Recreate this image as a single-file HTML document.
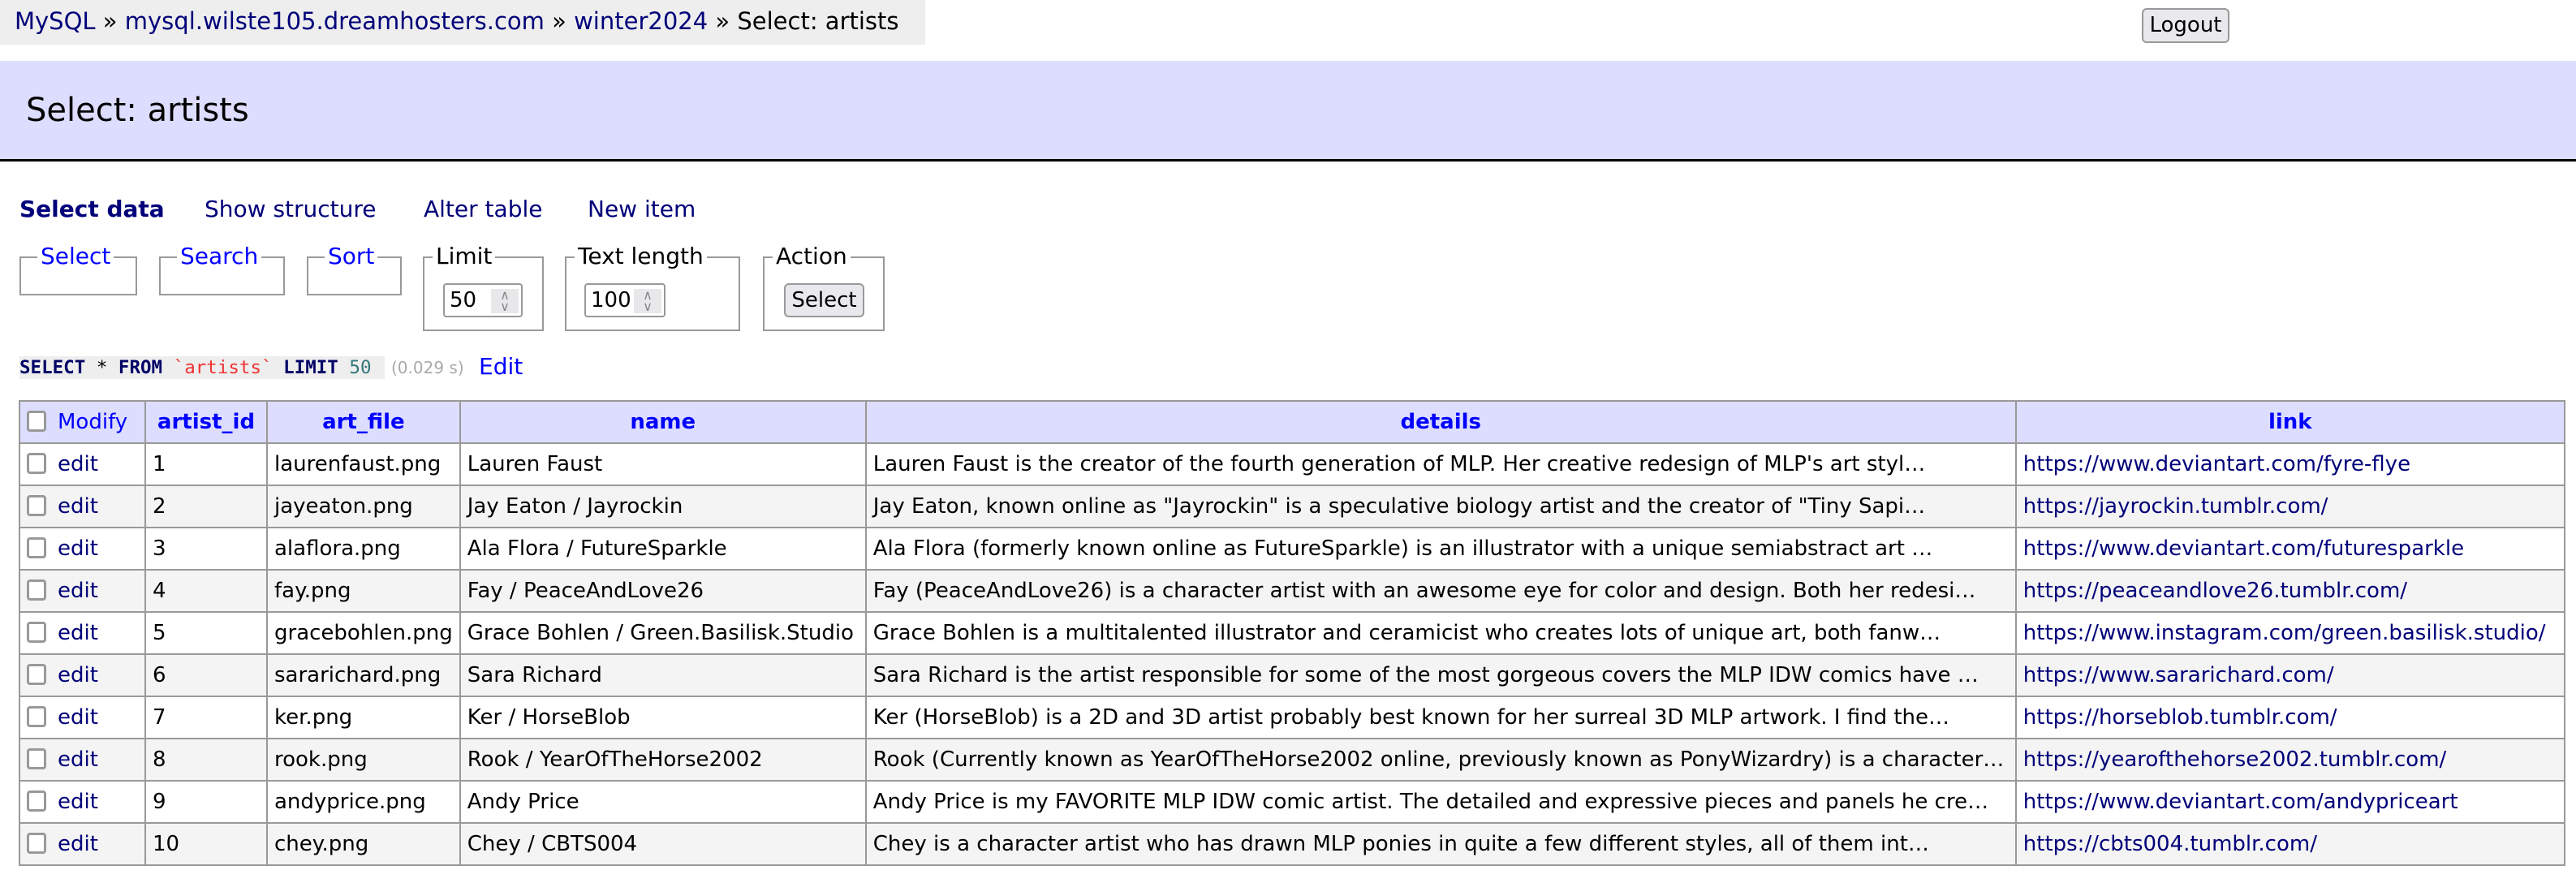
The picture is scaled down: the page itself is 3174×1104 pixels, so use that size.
<!DOCTYPE html>
<html><head><meta charset="utf-8"><style>
body{margin:0;width:3174px;height:1104px;background:#fff;font-family:"DejaVu Sans","Liberation Sans",sans-serif;font-size:26px;color:#000;position:relative;overflow:hidden}
.a{position:absolute;white-space:nowrap}
a{text-decoration:none;color:#00a}
#bc{left:0;top:0;width:1140px;height:55px;background:#eee;line-height:52px;font-size:29px;padding-left:18px;box-sizing:border-box}
#bc a{color:#00007a}
#logout{left:2639px;top:10px;width:108px;height:43px;border:2px solid #999;border-radius:6px;background:#e9e9ed;box-sizing:border-box;text-align:center;line-height:39px;font-size:26px}
#hd{left:0;top:75px;width:3174px;height:121px;background:#ddf;border-bottom:3px solid #000}
#hd span{position:absolute;left:32px;top:36px;font-size:40px;line-height:50px}
.menu{top:238px;font-size:28px;line-height:40px}
.menu a{color:#00007a}
.fs{position:absolute;border:2px solid #999;box-sizing:border-box}
.lg{position:absolute;top:-20px;background:#fff;padding:0 4px;font-size:28px;line-height:36px;white-space:nowrap}
.lg a{color:#00f}
.inp{position:absolute;border:2px solid #999;border-radius:4px;box-sizing:border-box;background:#fff;font-size:26px;line-height:38px;padding-left:6px}
.spin{position:absolute;right:3px;top:5px;width:34px;height:30px;background:#e8e8ea;color:#888;font-size:16px;line-height:14px;text-align:center;padding-top:1px;box-sizing:border-box}
.btn{position:absolute;border:2px solid #999;border-radius:6px;background:#e9e9ed;box-sizing:border-box;text-align:center;font-size:26px;line-height:38px}
#sql{left:24px;top:439px;height:28px;width:450px;background:#eee;font-family:"DejaVu Sans Mono","Liberation Mono",monospace;font-weight:bold;font-size:22.5px;line-height:28px;color:#006;overflow:hidden}
table{position:absolute;left:23px;top:493px;border-collapse:collapse;table-layout:fixed}
td,th{border:2px solid #999;height:50px;padding:0 8px;white-space:nowrap;overflow:hidden;font-size:26px;line-height:48px}
th{background:#ddf;color:#00f;font-weight:bold}
th a{color:#00f}
tr:nth-child(odd) td{background:#f4f4f4}
td a{color:#00007a}
.cb{display:inline-block;width:24px;height:26px;border:3px solid #999;border-radius:4px;vertical-align:-4px;margin-right:14px;box-sizing:border-box;background:#fff}
th.m{font-weight:normal;text-align:left}
</style></head><body>
<div id="bc" class="a"><a>MySQL</a> » <a>mysql.wilste105.dreamhosters.com</a> » <a>winter2024</a> » Select: artists</div>
<div id="logout" class="a">Logout</div>
<div id="hd" class="a"><span>Select: artists</span></div>
<div class="a menu" style="left:24px"><b><a>Select data</a></b></div>
<div class="a menu" style="left:252px"><a>Show structure</a></div>
<div class="a menu" style="left:522px"><a>Alter table</a></div>
<div class="a menu" style="left:724px"><a>New item</a></div>

<div class="fs" style="left:24px;top:316px;width:145px;height:48px"><div class="lg" style="left:20px"><a>Select</a></div></div>
<div class="fs" style="left:196px;top:316px;width:155px;height:48px"><div class="lg" style="left:20px"><a>Search</a></div></div>
<div class="fs" style="left:378px;top:316px;width:117px;height:48px"><div class="lg" style="left:20px"><a>Sort</a></div></div>
<div class="fs" style="left:521px;top:316px;width:149px;height:92px"><div class="lg" style="left:10px">Limit</div>
 <div class="inp" style="left:23px;top:31px;width:98px;height:42px">50<div class="spin">&#8743;<br>&#8744;</div></div></div>
<div class="fs" style="left:696px;top:316px;width:216px;height:92px"><div class="lg" style="left:10px">Text length</div>
 <div class="inp" style="left:22px;top:31px;width:100px;height:42px">100<div class="spin">&#8743;<br>&#8744;</div></div></div>
<div class="fs" style="left:940px;top:316px;width:150px;height:92px"><div class="lg" style="left:10px">Action</div>
 <div class="btn" style="left:24px;top:31px;width:99px;height:42px">Select</div></div>

<div id="sql" class="a">SELECT <span style="font-weight:normal;color:#000">*</span> FROM <span style="font-weight:normal;color:#e33">`artists`</span> LIMIT <span style="font-weight:normal;color:#377">50</span></div>
<div class="a" style="left:482px;top:437px;font-size:20px;line-height:32px;color:#aaa">(0.029 s)</div>
<div class="a" style="left:590px;top:432px;font-size:28px;line-height:40px"><a style="color:#00f">Edit</a></div>

<table>
<colgroup><col style="width:155px"><col style="width:150px"><col style="width:235px"><col style="width:500px"><col style="width:1417px"><col style="width:676px"></colgroup>
<tr><th class="m"><span class="cb"></span><a>Modify</a></th><th><a>artist_id</a></th><th><a>art_file</a></th><th><a>name</a></th><th><a>details</a></th><th><a>link</a></th></tr>
<tr><td><span class="cb"></span><a>edit</a></td><td>1</td><td>laurenfaust.png</td><td>Lauren Faust</td><td>Lauren Faust is the creator of the fourth generation of MLP. Her creative redesign of MLP's art styl…</td><td><a>https://www.deviantart.com/fyre-flye</a></td></tr>
<tr><td><span class="cb"></span><a>edit</a></td><td>2</td><td>jayeaton.png</td><td>Jay Eaton / Jayrockin</td><td>Jay Eaton, known online as "Jayrockin" is a speculative biology artist and the creator of "Tiny Sapi…</td><td><a>https://jayrockin.tumblr.com/</a></td></tr>
<tr><td><span class="cb"></span><a>edit</a></td><td>3</td><td>alaflora.png</td><td>Ala Flora / FutureSparkle</td><td>Ala Flora (formerly known online as FutureSparkle) is an illustrator with a unique semiabstract art …</td><td><a>https://www.deviantart.com/futuresparkle</a></td></tr>
<tr><td><span class="cb"></span><a>edit</a></td><td>4</td><td>fay.png</td><td>Fay / PeaceAndLove26</td><td>Fay (PeaceAndLove26) is a character artist with an awesome eye for color and design. Both her redesi…</td><td><a>https://peaceandlove26.tumblr.com/</a></td></tr>
<tr><td><span class="cb"></span><a>edit</a></td><td>5</td><td>gracebohlen.png</td><td>Grace Bohlen / Green.Basilisk.Studio</td><td>Grace Bohlen is a multitalented illustrator and ceramicist who creates lots of unique art, both fanw…</td><td><a>https://www.instagram.com/green.basilisk.studio/</a></td></tr>
<tr><td><span class="cb"></span><a>edit</a></td><td>6</td><td>sararichard.png</td><td>Sara Richard</td><td>Sara Richard is the artist responsible for some of the most gorgeous covers the MLP IDW comics have …</td><td><a>https://www.sararichard.com/</a></td></tr>
<tr><td><span class="cb"></span><a>edit</a></td><td>7</td><td>ker.png</td><td>Ker / HorseBlob</td><td>Ker (HorseBlob) is a 2D and 3D artist probably best known for her surreal 3D MLP artwork. I find the…</td><td><a>https://horseblob.tumblr.com/</a></td></tr>
<tr><td><span class="cb"></span><a>edit</a></td><td>8</td><td>rook.png</td><td>Rook / YearOfTheHorse2002</td><td>Rook (Currently known as YearOfTheHorse2002 online, previously known as PonyWizardry) is a character…</td><td><a>https://yearofthehorse2002.tumblr.com/</a></td></tr>
<tr><td><span class="cb"></span><a>edit</a></td><td>9</td><td>andyprice.png</td><td>Andy Price</td><td>Andy Price is my FAVORITE MLP IDW comic artist. The detailed and expressive pieces and panels he cre…</td><td><a>https://www.deviantart.com/andypriceart</a></td></tr>
<tr><td><span class="cb"></span><a>edit</a></td><td>10</td><td>chey.png</td><td>Chey / CBTS004</td><td>Chey is a character artist who has drawn MLP ponies in quite a few different styles, all of them int…</td><td><a>https://cbts004.tumblr.com/</a></td></tr>
</table>
</body></html>
